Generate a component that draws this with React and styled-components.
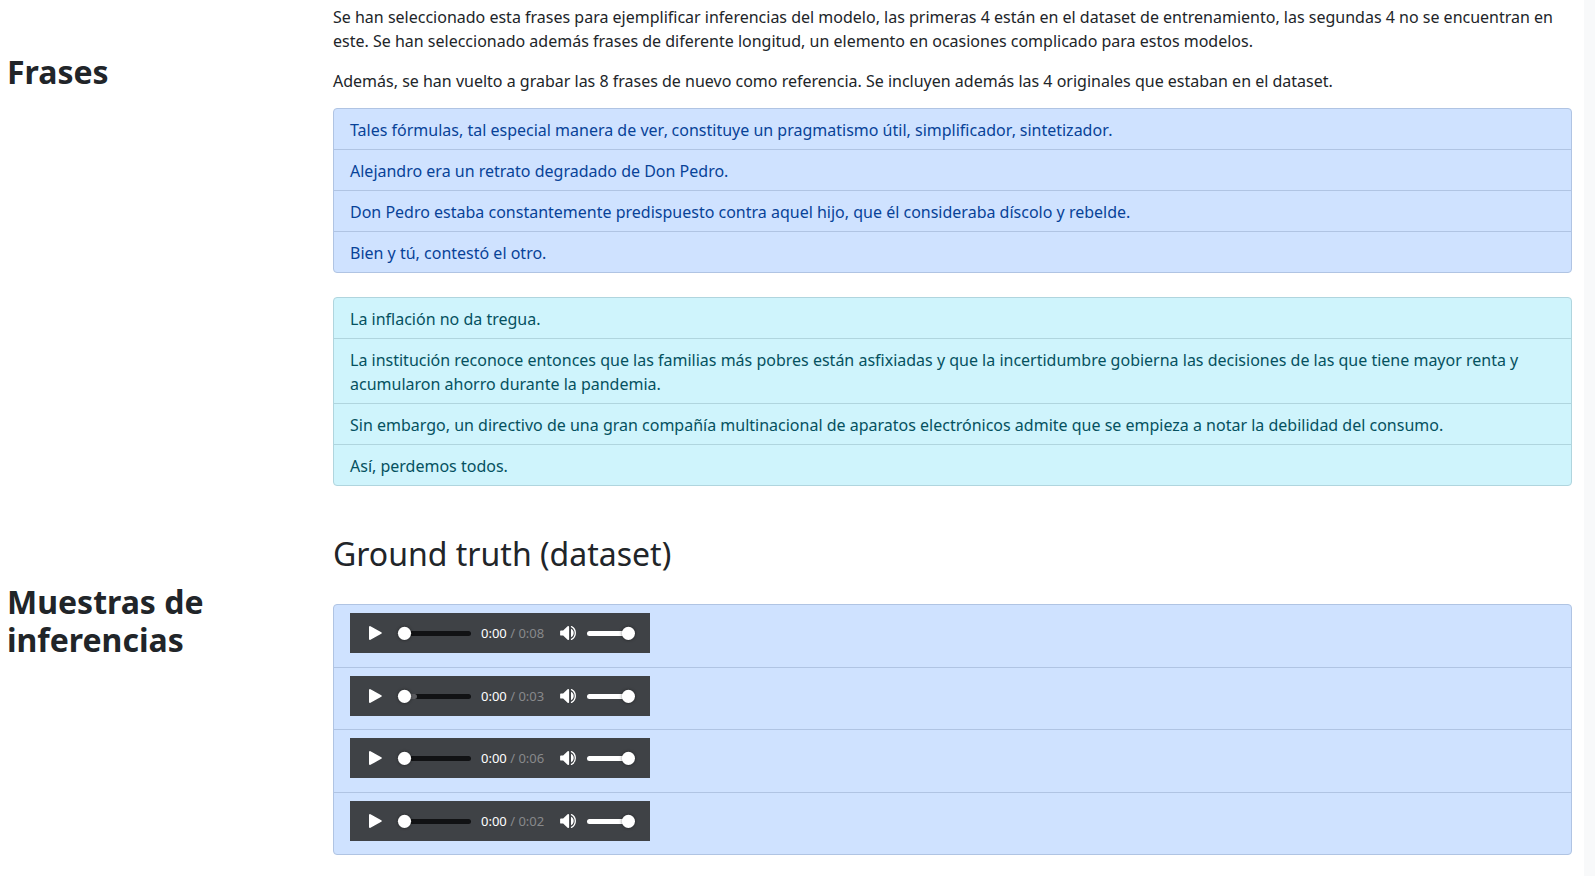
import React from "react";
import styled, { createGlobalStyle } from "styled-components";

const Global = createGlobalStyle`
  *, *::before, *::after { box-sizing: border-box; }
  body { margin: 0; background: #fff; color: #212529; font: 400 16px/1.5 "Noto Sans", sans-serif; height: 876px; overflow: hidden; }
`;
const Page = styled.main`
  height: 876px;
  overflow: hidden;
  padding: 0 12px 0 7px;
  border-right: 11px solid #f8f9fa;
`;
const Section = styled.section`
  display: grid;
  grid-template-columns: 302px 1fr;
  column-gap: 24px;
  margin-top: ${(p) => p.$top}px;
`;
const SideTitle = styled.h2`
  margin: 48px 0 0;
  font-size: 32px;
  line-height: 38.4px;
  font-weight: 700;
`;
const Heading = styled.h2`
  margin: 0;
  font-size: 32px;
  line-height: 38.4px;
  font-weight: 400;
`;
const Text = styled.p`
  margin: 0 0 16px;
  &:last-of-type { margin-bottom: 15px; }
`;
const tones = {
  primary: { fg: "#084298", bg: "#cfe2ff", line: "#b0c4e3" },
  info: { fg: "#055160", bg: "#cff4fc", line: "#b0d5de" },
};
const List = styled.ul`
  list-style: none;
  margin: ${(p) => p.$top || 0}px 0 0;
  padding: 0;
  border: 1px solid ${(p) => tones[p.$tone].line};
  border-radius: 4px;
  overflow: hidden;
  color: ${(p) => tones[p.$tone].fg};
  background: ${(p) => tones[p.$tone].bg};
`;
const Item = styled.li`
  padding: 9px 16px 7px;
  border-top: 1px solid ${(p) => tones[p.$tone].line};
  &:first-child { border-top: 0; }
`;
const AudioItem = styled(Item)`
  padding-top: 8px;
  height: ${(p) => p.$h}px;
`;
const Unkerned = styled.span`
  font-kerning: none;
  letter-spacing: -0.5px;
`;
const Player = styled.div`
  width: 300px;
  height: 40px;
  display: flex;
  align-items: center;
  background: #3f4246;
  color: #fff;
  font-size: 13px;
  line-height: 40px;
`;
const Icon = styled.svg`
  display: block;
  flex: none;
`;
const Knob = styled.circle`
  fill: #fff;
  filter: drop-shadow(0 0 1.5px rgba(0, 0, 0, 0.5));
`;
const Time = styled.span`
  width: 72px;
  white-space: nowrap;
  span { color: #88898b; }
`;

function AudioPlayer({ duration, loaded }) {
  return (
    <Player>
      <Icon width="131" height="40" viewBox="0 0 131 40">
        <path d="M20 14v12l10.8-6z" fill="#fff" stroke="#fff" strokeWidth="2" strokeLinejoin="round" />
        <path d="M55 20.5h63.5" stroke="#111214" strokeWidth="5" strokeLinecap="round" />
        {loaded && <path d="M55 20.5h9.5" stroke="#5b5c60" strokeWidth="5" strokeLinecap="round" />}
        <Knob cx="54.5" cy="20.3" r="6.6" />
      </Icon>
      <Time>0:00 <span>/ {duration}</span></Time>
      <Icon width="97" height="40" viewBox="203 0 97 40">
        <path d="M211 18.300v3.400h2.500l4.700 4.400V13.900l-4.700 4.400z" fill="#fff" stroke="#fff" strokeWidth="1.800" strokeLinejoin="round" />
        <path d="M221 15.800v8.400c1.700-.8 2.700-2.300 2.700-4.200s-1-3.400-2.700-4.200z" fill="#fff" />
        <path d="M221.500 13.600c2.200 1.200 3.800 3.600 3.800 6.400s-1.600 5.200-3.800 6.400" fill="none" stroke="#fff" strokeWidth="1.300" strokeLinecap="round" />
        <path d="M239.5 20.5h38" stroke="#fff" strokeWidth="5" strokeLinecap="round" />
        <Knob cx="278.4" cy="20.3" r="6.6" />
      </Icon>
    </Player>
  );
}

function Phrase({ text }) {
  return text
    .split(/(r[,.])/)
    .map((part, i) => (i % 2 ? <Unkerned key={i}>{part}</Unkerned> : part));
}

const trained = [
  "Tales fórmulas, tal especial manera de ver, constituye un pragmatismo útil, simplificador, sintetizador.",
  "Alejandro era un retrato degradado de Don Pedro.",
  "Don Pedro estaba constantemente predispuesto contra aquel hijo, que él consideraba díscolo y rebelde.",
  "Bien y tú, contestó el otro.",
];
const unseen = [
  "La inflación no da tregua.",
  "La institución reconoce entonces que las familias más pobres están asfixiadas y que la incertidumbre gobierna las decisiones de las que tiene mayor renta y acumularon ahorro durante la pandemia.",
  "Sin embargo, un directivo de una gran compañía multinacional de aparatos electrónicos admite que se empieza a notar la debilidad del consumo.",
  "Así, perdemos todos.",
];
const clips = [
  { duration: "0:08", h: 62 },
  { duration: "0:03", h: 62, loaded: true },
  { duration: "0:06", h: 63 },
  { duration: "0:02", h: 62 },
];

export default function App() {
  return (
    <>
      <Global />
      <Page>
        <Section $top={5}>
          <SideTitle>Frases</SideTitle>
          <div>
            <Text>Se han seleccionado esta frases para ejemplificar inferencias del modelo, las primeras 4 están en el dataset de entrenamiento, las segundas 4 no se encuentran en este. Se han seleccionado además frases de diferente longitud, un elemento en ocasiones complicado para estos modelos.</Text>
            <Text>Además, se han vuelto a grabar las 8 frases de nuevo como referencia. Se incluyen además las 4 originales que estaban en el dataset.</Text>
            <List $tone="primary">
              {trained.map((t) => <Item $tone="primary" key={t}><Phrase text={t} /></Item>)}
            </List>
            <List $tone="info" $top={24}>
              {unseen.map((t) => <Item $tone="info" key={t}><Phrase text={t} /></Item>)}
            </List>
          </div>
        </Section>
        <Section $top={49}>
          <SideTitle>Muestras de inferencias</SideTitle>
          <div>
            <Heading>Ground truth (dataset)</Heading>
            <List $tone="primary" $top={31}>
              {clips.map((c) => (
                <AudioItem $tone="primary" $h={c.h} key={c.duration}>
                  <AudioPlayer duration={c.duration} loaded={c.loaded} />
                </AudioItem>
              ))}
            </List>
          </div>
        </Section>
      </Page>
    </>
  );
}
